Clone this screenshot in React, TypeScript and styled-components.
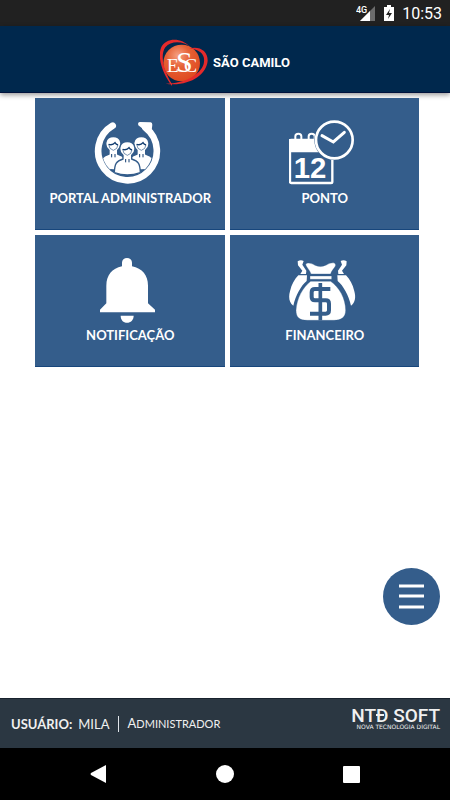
import React from "react";
import styled, { createGlobalStyle } from "styled-components";

const BLUE = "#345d8b";

const GlobalStyle = createGlobalStyle`
  * { box-sizing: border-box; }
  body { margin: 0; background: #fff; font-family: Roboto, "Liberation Sans", sans-serif; }
  button { font: inherit; color: inherit; border: 0; padding: 0; cursor: pointer; }
`;

const Screen = styled.div`
  min-height: 100vh;
  display: flex;
  flex-direction: column;
`;

const StatusBar = styled.div`
  height: 26px;
  padding: 0 8px;
  display: flex;
  align-items: center;
  justify-content: flex-end;
  gap: 8px;
  background: #212121;
  color: #fff;
`;

const Clock = styled.time`
  font-size: 16px;
  line-height: 26px;
  padding-top: 2px;
`;

const Header = styled.header`
  height: 67px;
  padding-top: 8px;
  display: flex;
  align-items: center;
  justify-content: center;
  gap: 5px;
  background: #00284d;
  border-bottom: 1px solid #00123c;
  box-shadow: 0 2px 5px rgba(0, 0, 0, 0.4);
  color: #fff;
`;

const Title = styled.h1`
  margin: 0;
  font-size: 13px;
  line-height: 20px;
  font-weight: 700;
`;

const Main = styled.main`
  flex: 1;
  padding: 5px 31px 0 35px;
`;

const TileGrid = styled.div`
  display: grid;
  grid-template-columns: 1fr 1fr;
  gap: 5px;
`;

const Tile = styled.button`
  height: 132px;
  display: flex;
  flex-direction: column;
  align-items: center;
  padding: 22px 0 0;
  gap: 4px;
  background: ${BLUE};
  color: #fff;
  border-bottom: 1px solid #17467c;
`;

const IconBox = styled.span`
  display: flex;
  padding-right: 4px;
`;

const TileLabel = styled.span`
  font-family: Lato, "Liberation Sans", sans-serif;
  font-weight: 700;
  font-size: 13px;
  line-height: 16px;
  padding-left: 1px;
`;

const MenuButton = styled.button`
  position: fixed;
  right: 10px;
  bottom: 175px;
  width: 57px;
  height: 57px;
  border-radius: 50%;
  display: grid;
  place-items: center;
  background: ${BLUE};
`;

const Footer = styled.footer`
  height: 50px;
  padding: 0 10px 0 11px;
  display: flex;
  align-items: center;
  justify-content: space-between;
  background: #2b3742;
  border-top: 1px solid #18222d;
  color: #f0f0f0;
`;

const User = styled.div`
  display: flex;
  align-items: center;
  font-family: Lato, "Liberation Sans", sans-serif;
  font-size: 13px;
  line-height: 16px;
`;

const UserName = styled.span`
  padding: 0 9px 0 6px;
  border-right: 1px solid #e0e5ea;
`;

const Role = styled.span`
  padding-left: 8px;
  font-size: 11px;
  text-transform: uppercase;

  &::first-letter { font-size: 13px; }
`;

const Brand = styled.div`
  display: flex;
  flex-direction: column;
  align-items: flex-end;
  padding-bottom: 10px;
  white-space: nowrap;
`;

const BrandName = styled.span`
  font-family: Roboto, sans-serif;
  font-weight: 500;
  font-size: 19px;
  line-height: 16px;
`;

const BarredLetter = styled.span`
  position: relative;

  &::after {
    content: "";
    position: absolute;
    left: 0;
    top: 10px;
    width: 8px;
    height: 2px;
    background: currentColor;
  }
`;

const BrandLine = styled.span`
  font-family: "DejaVu Sans", sans-serif;
  font-size: 6px;
  line-height: 5px;
`;

const NavBar = styled.nav`
  height: 52px;
  display: flex;
  align-items: center;
  justify-content: space-around;
  padding: 0 35px;
  background: #000;
`;

const NavButton = styled.button`
  width: 48px;
  height: 48px;
  display: grid;
  place-items: center;
  background: transparent;
`;

const SignalIcon = () => (
  <svg width="20" height="16" viewBox="0 0 20 16" aria-hidden="true">
    <path d="M19 1V16H4Z" fill="#6c6c6c" />
    <path d="M14 6V16H4Z" fill="#fff" />
    <text x="0" y="8" fontFamily="Roboto" fontSize="9" fontWeight="500" fill="#fff" stroke="#212121" strokeWidth="2" paintOrder="stroke">4G</text>
  </svg>
);

const BatteryIcon = () => (
  <svg width="10" height="16" viewBox="0 0 10 16" aria-hidden="true">
    <path d="M3 0H7V2H10V16H0V2H3Z" fill="#fff" />
    <path d="M6 4L2 10H5L4 14L8 8H5Z" fill="#212121" />
  </svg>
);

const Logo = () => (
  <svg width="48" height="48" viewBox="30 25 144 144" aria-hidden="true">
    <defs>
      <radialGradient id="ball" cx="0.4" cy="0.3" r="0.7">
        <stop offset="0" stopColor="#f5a183" />
        <stop offset="0.45" stopColor="#e66135" />
        <stop offset="1" stopColor="#df4a20" />
      </radialGradient>
    </defs>
    <circle cx="95" cy="97" r="55" fill="url(#ball)" />
    <path d="M66 166C40 132 20 82 34 49C47 22 92 17 122 50C101 31 63 29 46 50C27 77 46 128 66 160Z" fill="#e42a2b" />
    <path d="M117 54C145 45 174 59 173 90C170 132 117 169 46 159C101 160 151 133 161 100C169 69 145 54 117 54Z" fill="#e42a2b" />
    <g fill="#fff" fontFamily="Liberation Serif">
      <text x="50" y="125" fontSize="59">E</text>
      <text x="78" y="124" fontSize="90">S</text>
      <text x="102" y="125" fontSize="59">C</text>
    </g>
  </svg>
);

const TileIcon = ({ box, children }: { box: string; children: React.ReactNode }) => (
  <IconBox>
    <svg width="67" height="66" viewBox={box} aria-hidden="true">
      {children}
    </svg>
  </IconBox>
);

const Person = ({ x, y }: { x: number; y: number }) => (
  <g transform={`translate(${x} ${y})`}>
    <path d="M-39 70C-38 44 -34 36 -13 29V18C-28 7 -27 -23 0 -23S28 7 13 18V29C34 36 38 44 39 70Q0 84 -39 70Z" fill="#fff" stroke={BLUE} strokeWidth="4" />
    <path d="M-14 0Q-13 15 0 18Q13 15 14 1" fill="none" stroke={BLUE} strokeWidth="2" />
    <path d="M-14 0Q-2 4 5 -5Q9 2 14 1" fill="none" stroke="#123d70" strokeWidth="4" />
    <path d="M-5 29V39M5 29V39" stroke="#123d70" strokeWidth="3" />
  </g>
);

const AdminIcon = () => (
  <TileIcon box="194 90 201 198">
    <defs>
      <clipPath id="inside"><circle cx="294" cy="183" r="76" /></clipPath>
    </defs>
    <g clipPath="url(#inside)">
      <Person x={252} y={163} />
      <Person x={336} y={163} />
      <Person x={294} y={178} />
    </g>
    <path d="M250 107A88 88 0 1 0 348 113" fill="none" stroke="#fff" strokeWidth="20" strokeLinecap="round" />
    <path d="M332 96L364 97Q369 98 369 104L365 136L327 106Q324 97 332 96Z" fill="#fff" />
  </TileIcon>
);

const ClockIcon = () => (
  <TileIcon box="193 93 201 198">
    <g fill="none" stroke="#fff">
      <path d="M212 155V142a9 8 0 0 1 18 0V155M252 155V142a9 8 0 0 1 18 0V155" strokeWidth="6" />
      <rect x="196" y="153" width="127" height="129" rx="4" strokeWidth="7" />
    </g>
    <path d="M193 150H326V190H193Z" fill="#fff" />
    <circle cx="329" cy="153" r="60" fill={BLUE} />
    <circle cx="329" cy="153" r="55" fill="none" stroke="#fff" strokeWidth="8" />
    <path d="M292 140L326 159L359 130" fill="none" stroke="#fff" strokeWidth="9" strokeLinecap="round" />
    <text x="207" y="266" fontFamily="Liberation Sans, sans-serif" fontSize="88" fontWeight="700" fill="#fff">12</text>
  </TileIcon>
);

const BellIcon = () => (
  <TileIcon box="192 79 201 198">
    <g fill="#fff">
      <path d="M276 107V96a15 14 0 0 1 30 0V107C337 113 354 134 354 165V218L375 237V245H210V237L229 218V165C229 134 246 113 276 107Z" />
      <path d="M272 255H311C311 268 302 276 291 276S272 268 272 255Z" />
    </g>
  </TileIcon>
);

const SideBag = () => (
  <g fill="#fff">
    <path d="M216 93Q225 87 234 92L230 103L242 121L241 131H224L230 121L217 105Z" />
    <path d="M218 135H244L243 152C226 166 210 195 203 226C190 218 188 200 193 183C198 162 206 147 218 135Z" />
  </g>
);

const MoneyIcon = () => (
  <TileIcon box="190 80 201 198">
    <SideBag />
    <g transform="translate(579 0) scale(-1 1)"><SideBag /></g>
    <path d="M240 103C243 95 257 98 268 105Q285 113 302 104C314 97 328 94 330 104C329 112 317 120 315 131H256C252 118 243 112 240 103ZM253 137H318V147H253ZM255 153H315C341 171 360 205 360 240C360 262 345 270 325 270H245C222 270 211 262 211 240C213 205 231 171 255 153Z" fill="#fff" stroke={BLUE} strokeWidth="1" />
    <path d="M284 158V270" stroke={BLUE} strokeWidth="11" />
    <path d="M314 176H268q-10 0 -10 10v14q0 10 10 10h32q10 0 10 10v20q0 10 -10 10H253" fill="none" stroke={BLUE} strokeWidth="12" />
  </TileIcon>
);

const tiles = [
  { label: "PORTAL ADMINISTRADOR", icon: <AdminIcon /> },
  { label: "PONTO", icon: <ClockIcon /> },
  { label: "NOTIFICAÇÃO", icon: <BellIcon /> },
  { label: "FINANCEIRO", icon: <MoneyIcon /> },
];

export default function App() {
  return (
    <Screen>
      <GlobalStyle />
      <StatusBar>
        <SignalIcon />
        <BatteryIcon />
        <Clock>10:53</Clock>
      </StatusBar>
      <Header>
        <Logo />
        <Title>SÃO CAMILO</Title>
      </Header>
      <Main>
        <TileGrid>
          {tiles.map((tile) => (
            <Tile key={tile.label} type="button">
              {tile.icon}
              <TileLabel>{tile.label}</TileLabel>
            </Tile>
          ))}
        </TileGrid>
      </Main>
      <MenuButton type="button" aria-label="Menu">
        <svg width="25" height="25" viewBox="0 0 25 25" aria-hidden="true">
          <path d="M0 2H25M0 12H25M0 23H25" stroke="#fff" strokeWidth="3" />
        </svg>
      </MenuButton>
      <Footer>
        <User>
          <strong>USUÁRIO:</strong>
          <UserName>MILA</UserName>
          <Role>Administrador</Role>
        </User>
        <Brand>
          <BrandName>NT<BarredLetter>D</BarredLetter> SOFT</BrandName>
          <BrandLine>NOVA TECNOLOGIA DIGITAL</BrandLine>
        </Brand>
      </Footer>
      <NavBar>
        <NavButton type="button" aria-label="Voltar">
          <svg width="18" height="18" viewBox="0 0 18 18"><path d="M17 0V18L2 10Q1 9 2 8Z" fill="#fff" /></svg>
        </NavButton>
        <NavButton type="button" aria-label="Início">
          <svg width="18" height="18" viewBox="0 0 18 18"><circle cx="9" cy="9" r="9" fill="#fff" /></svg>
        </NavButton>
        <NavButton type="button" aria-label="Recentes">
          <svg width="17" height="17" viewBox="0 0 17 17"><rect width="17" height="17" rx="1" fill="#fff" /></svg>
        </NavButton>
      </NavBar>
    </Screen>
  );
}
